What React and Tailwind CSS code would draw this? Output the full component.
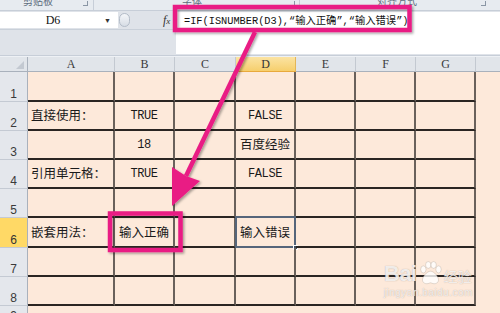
import React from 'react';

const cjk = { fontFamily: '"Noto Sans CJK SC", "Noto Sans", sans-serif' };
const mono = { fontFamily: '"Liberation Mono", "Noto Sans CJK SC", monospace' };

const cols = ['A', 'B', 'C', 'D', 'E', 'F', 'G'];
const rowHeights = ['h-[30px]', 'h-[29px]', 'h-[29px]', 'h-[29px]', 'h-[29px]', 'h-[30px]', 'h-[29px]', 'h-[29px]'];

const cells = {
    '2A': { text: '直接使用：', kind: 'cjk', align: 'left' },
    '2B': { text: 'TRUE', kind: 'mono' },
    '2D': { text: 'FALSE', kind: 'mono' },
    '3B': { text: '18', kind: 'mono' },
    '3D': { text: '百度经验', kind: 'cjk' },
    '4A': { text: '引用单元格：', kind: 'cjk', align: 'left' },
    '4B': { text: 'TRUE', kind: 'mono' },
    '4D': { text: 'FALSE', kind: 'mono' },
    '6A': { text: '嵌套用法：', kind: 'cjk', align: 'left' },
    '6B': { text: '输入正确', kind: 'cjk' },
    '6D': { text: '输入错误', kind: 'cjk' },
};

const Cell = ({ row, col }) => {
    const cell = cells[`${row}${col}`];
    const selected = row === 6 && col === 'D';
    return (
        <div
            className={`relative flex items-center border-r-2 border-b-2 border-r-[#6a615b] border-b-[#2a2522] ${
                cell && cell.align === 'left' ? 'justify-start pl-[3px]' : 'justify-center'
            }`}
        >
            {cell && (
                <span
                    className={`text-[#1a1a1a] whitespace-nowrap ${cell.kind === 'cjk' ? 'text-[12.5px]' : 'text-[12px] tracking-[-0.4px]'}`}
                    style={cell.kind === 'cjk' ? cjk : mono}
                >
                    {cell.text}
                </span>
            )}
            {selected && (
                <>
                    <div className="absolute -left-[1px] -top-[2px] -right-[2px] -bottom-[2px] border-2 border-[#55657a]" />
                    <div className="absolute -right-[4px] -bottom-[4px] w-[5px] h-[5px] bg-[#3f4f62] border border-white" />
                </>
            )}
        </div>
    );
};

const RowHeader = ({ n, active, className = '' }) => (
    <div
        className={`flex justify-center border-r border-b border-r-[#a9b1bc] border-b-[#c4cad3] text-[12px] leading-none ${
            active ? 'bg-[#ffd966] text-[#333]' : 'bg-[#e4e7ec] text-[#3a3a3a]'
        } ${className}`}
        style={{ fontFamily: '"Liberation Sans", Arial, sans-serif' }}
    >
        {n}
    </div>
);

export default function App() {
    return (
        <div className="relative w-[500px] h-[313px] overflow-hidden bg-[#fde9da]">
            {/* ribbon group labels, cut off at the top */}
            <div
                className="flex h-[11px] overflow-hidden bg-[#e7ebf0] border-b border-[#c7ced8] text-[10px] text-[#5d6b7c] leading-none"
                style={cjk}
            >
                <div className="relative w-[94px] border-r border-[#c7ced8]">
                    <span className="absolute left-[23px] -top-[4px]">剪贴板</span>
                    <span className="absolute left-[83px] top-[1px] w-[5px] h-[5px] border-r border-b border-[#8a96a5]" />
                </div>
                <div className="relative w-[206px] border-r border-[#c7ced8]">
                    <span className="absolute left-[88px] -top-[4px]">字体</span>
                    <span className="absolute left-[196px] top-[1px] w-[5px] h-[5px] border-r border-b border-[#8a96a5]" />
                </div>
                <div className="relative flex-1">
                    <span className="absolute left-[77px] -top-[4px]">对齐方式</span>
                    <span className="absolute left-[181px] top-[1px] w-[5px] h-[5px] border-r border-b border-[#8a96a5]" />
                </div>
            </div>

            {/* name box + formula bar */}
            <div className="flex h-[44px] bg-[#dfe3e9]">
                <div className="w-[176px] flex flex-col">
                    <div className="flex items-start h-[18px] pt-[1px]">
                        <div className="flex items-center w-[118px] h-[16px] bg-white">
                            <span
                                className="flex-1 text-center pl-[2px] text-[12px] text-[#111]"
                                style={{ fontFamily: '"Liberation Serif", serif' }}
                            >
                                D6
                            </span>
                            <span className="w-[14px] text-[7px] text-[#333] leading-none">▼</span>
                        </div>
                        <div className="ml-[1px] mt-[1px] w-[11px] h-[14px] rounded-full border border-[#b3bcc8] bg-gradient-to-b from-[#f4f6f9] to-[#d7dde5]" />
                        <span
                            className="ml-[33px] italic text-[12px] text-[#333] leading-[16px]"
                            style={{ fontFamily: '"Liberation Serif", serif' }}
                        >
                            f<span className="text-[9px]">x</span>
                        </span>
                    </div>
                    <div className="flex-1 border-t border-[#c9d0d9]" />
                </div>
                <div className="flex-1 bg-white mt-[1px] mb-[1px] pl-[8px] pt-[2px]">
                    <div className="h-[14px] text-[10.3px] leading-[14px] text-[#111] whitespace-nowrap" style={mono}>
                        =IF(ISNUMBER(D3),“输入正确”,“输入错误”)
                    </div>
                </div>
            </div>
            <div className="h-[2px] bg-[#eef1f5] border-t border-[#c7ced8]" />

            {/* sheet grid */}
            <div className="grid grid-cols-[28px_87px_60px_61px_60px_60px_60px_60px_24px]">
                <div className="relative h-[15px] bg-[#e1e5ea] border-r border-b border-r-[#a9b1bc] border-b-[#a9b1bc]">
                    <div className="absolute right-[3px] bottom-[2px] w-0 h-0 border-l-[8px] border-l-transparent border-b-[8px] border-b-[#c3c9d1]" />
                </div>
                {cols.map(c => (
                    <div
                        key={c}
                        className={`h-[15px] flex items-center justify-center text-[12px] leading-none border-r border-b ${
                            c === 'D'
                                ? 'bg-gradient-to-b from-[#fbe3a2] to-[#f6cf6c] border-r-[#e3b658] border-b-[#e8a93c] text-[#333]'
                                : 'bg-[#e1e5ea] border-r-[#c3c9d1] border-b-[#a9b1bc] text-[#3a3a3a]'
                        }`}
                        style={{ fontFamily: '"Liberation Serif", serif' }}
                    >
                        {c}
                    </div>
                ))}
                <div className="h-[15px] bg-[#e1e5ea] border-b border-b-[#a9b1bc]" />

                {rowHeights.map((h, i) => {
                    const row = i + 1;
                    return (
                        <React.Fragment key={row}>
                            <RowHeader n={row} active={row === 6} className={`${h} items-end pb-[1px]`} />
                            {cols.map(c => (
                                <Cell key={c} row={row} col={c} />
                            ))}
                            <div />
                        </React.Fragment>
                    );
                })}

                <RowHeader n={9} className="h-[12px] items-start pt-[4px]" />
            </div>

            {/* watermark */}
            <div className="absolute left-[384px] top-[261px] flex flex-col items-start text-white/80 pointer-events-none [text-shadow:0_0_1px_rgba(140,120,105,0.7)]">
                <div className="flex items-end leading-none">
                    <span className="text-[22px] font-bold tracking-[-0.5px]" style={{ fontFamily: '"Liberation Sans", Arial, sans-serif' }}>
                        Bai
                    </span>
                    <svg width="25" height="24" viewBox="0 0 28 26" className="mx-[1px]">
                        <g fill="rgba(255,255,255,0.8)" stroke="rgba(140,120,105,0.45)" strokeWidth="0.6">
                            <ellipse cx="6" cy="9" rx="3" ry="4" />
                            <ellipse cx="11.5" cy="4" rx="3" ry="3.8" />
                            <ellipse cx="17.5" cy="4" rx="3" ry="3.8" />
                            <ellipse cx="23" cy="9" rx="3" ry="4" />
                            <path d="M14 11c-4 0-9 6-9 10 0 3 3 4 5 4 2 0 3-1 4-1s2 1 4 1c2 0 5-1 5-4 0-4-5-10-9-10z" />
                        </g>
                    </svg>
                    <span className="text-[14px] mb-[2px]" style={cjk}>经验</span>
                </div>
                <span className="text-[10px] leading-none mt-[3px] tracking-[0.5px]" style={{ fontFamily: '"Liberation Sans", Arial, sans-serif' }}>
                    jingyan.baidu.com
                </span>
            </div>

            {/* pink annotations */}
            <svg className="absolute left-0 top-0 pointer-events-none" width="500" height="313" viewBox="0 0 500 313">
                <defs>
                    <filter id="sh" x="-10%" y="-10%" width="130%" height="130%">
                        <feDropShadow dx="1.5" dy="1.5" stdDeviation="1" floodColor="#000" floodOpacity="0.35" />
                    </filter>
                </defs>
                <g filter="url(#sh)">
                    <g stroke="#e91e84" fill="none" strokeWidth="4.5">
                        <rect x="175" y="7" width="234.5" height="23" />
                        <rect x="110" y="213.5" width="70.5" height="36.5" />
                        <line x1="255" y1="32" x2="186" y2="176" />
                    </g>
                    <polygon points="172,206 172,167 186,176 200,181" fill="#e91e84" />
                </g>
            </svg>
        </div>
    );
}
